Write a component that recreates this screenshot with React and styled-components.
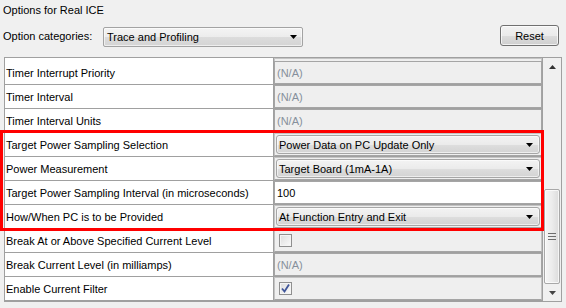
import React from 'react';
import styled, { createGlobalStyle } from 'styled-components';

const Global = createGlobalStyle`
  html, body { margin: 0; padding: 0; background: #f0f0f0; }
  body { font-family: "Liberation Sans", Arial, sans-serif; font-size: 11px; color: #000; }
  * { box-sizing: border-box; }
`;

const Page = styled.div`
  position: relative;
  width: 566px;
  height: 308px;
  overflow: hidden;
  display: flex;
  flex-direction: column;
`;

const Title = styled.div`
  height: 20px;
  line-height: 20px;
  padding-left: 3px;
`;

const Toolbar = styled.div`
  display: flex;
  align-items: flex-start;
  height: 22px;
  margin-top: 5px;
  padding: 0 7px 0 3px;
`;

const ToolLabel = styled.span`
  margin-top: 5px;
  width: 100px;
`;

const Combo = styled.div`
  margin-top: 2px;
  width: 200px;
  height: 20px;
  border: 1px solid #a3a3a3;
  border-radius: 2px;
  background: linear-gradient(#f4f4f4 0%, #ececec 50%, #dcdcdc 51%, #d4d4d4 100%);
  display: flex;
  align-items: center;
  justify-content: space-between;
  padding: 0 5px 0 3px;
  box-shadow: inset 0 0 0 1px rgba(255,255,255,0.6);
`;

const Spacer = styled.div`
  flex: 1;
`;

const Button = styled.button`
  width: 59px;
  height: 21px;
  border: 1px solid #707070;
  border-radius: 3px;
  background: linear-gradient(#f2f2f2 0%, #ebebeb 50%, #dddddd 51%, #cfcfcf 100%);
  box-shadow: inset 0 0 0 1px rgba(255,255,255,0.7);
  font: inherit;
  color: #000;
  padding: 0;
`;

const Table = styled.div`
  margin: 10px 0 0 4px;
  width: 558px;
  height: 245px;
  border: 1px solid #a0a0a0;
  display: flex;
  background: #fff;
`;

const Body = styled.div`
  flex: 1;
  display: flex;
  flex-direction: column;
`;

const Row = styled.div`
  display: grid;
  grid-template-columns: 268px 1px 268px;
  height: ${p => p.$h || 24}px;
  border-bottom: 1px solid #a0a0a0;
`;

const Label = styled.div`
  background: #fff;
  display: flex;
  align-items: center;
  padding-left: 1px;
  white-space: nowrap;
`;

const ColLine = styled.div`
  background: #a0a0a0;
`;

const Cell = styled.div`
  background: ${p => (p.$white ? '#fff' : '#efefef')};
  border: 1px solid ${p => (p.$boxed ? '#a5a5a5' : '#c4c4c4')};
  border-bottom-color: #a5a5a5;
  display: flex;
  align-items: center;
  padding: ${p => (p.$pad ? '0 0 0 2px' : '1px')};
  color: ${p => (p.$muted ? '#86909c' : '#000')};
`;

const Select = styled.div`
  flex: 1;
  align-self: stretch;
  border: 1px solid #a6a6a6;
  border-radius: 3px;
  background: linear-gradient(#f3f3f3 0%, #ebebeb 50%, #dedede 51%, #d3d3d3 100%);
  box-shadow: inset 0 0 0 1px rgba(255,255,255,0.6);
  display: flex;
  align-items: center;
  justify-content: space-between;
  padding: 0 6px 0 2px;
`;

const Box = styled.span`
  width: 13px;
  height: 13px;
  margin-left: 3px;
  border: 1px solid #8f8f8f;
  background: linear-gradient(135deg, #dcdcdc, #fbfbfb);
  box-shadow: inset 0 0 0 1px #f4f4f4;
  display: flex;
  align-items: center;
  justify-content: center;
`;

const Scrollbar = styled.div`
  width: 19px;
  border-left: 1px solid #a0a0a0;
  background: #f0f0f0;
  display: flex;
  flex-direction: column;
`;

const ArrowBtn = styled.div`
  height: 17px;
  display: flex;
  align-items: center;
  justify-content: center;
`;

const Track = styled.div`
  flex: 1;
  display: flex;
  flex-direction: column;
`;

const Thumb = styled.div`
  margin: 114px 1px 0 1px;
  height: 95px;
  border: 1px solid #a8a8a8;
  border-radius: 2px;
  background: linear-gradient(90deg, #f6f6f6 0%, #ececec 50%, #dcdcdc 100%);
  box-shadow: inset 0 0 0 1px rgba(255,255,255,0.7);
  display: flex;
  align-items: center;
  justify-content: center;
`;

const Highlight = styled.div`
  position: absolute;
  left: 0;
  top: 130px;
  width: 544px;
  height: 101px;
  border: 3px solid #ff0000;
  pointer-events: none;
`;

const Down = ({ c = '#000' }) => (
  <svg width="7" height="4" viewBox="0 0 7 4"><polygon points="0,0 7,0 3.5,4" fill={c} /></svg>
);
const Up = ({ c = '#333' }) => (
  <svg width="7" height="4" viewBox="0 0 7 4"><polygon points="0,4 7,4 3.5,0" fill={c} /></svg>
);

const Grip = () => (
  <svg width="8" height="7" viewBox="0 0 8 7">
    <rect x="0" y="0" width="8" height="1" fill="#6e6e6e" />
    <rect x="0" y="3" width="8" height="1" fill="#6e6e6e" />
    <rect x="0" y="6" width="8" height="1" fill="#6e6e6e" />
  </svg>
);

const Check = () => (
  <svg width="11" height="11" viewBox="0 0 11 11">
    <path d="M2 5.5 L4.5 8.5 L9 1.5" stroke="#3f5599" strokeWidth="1.8" fill="none" />
  </svg>
);

const rows = [
  { label: 'Timer Interrupt Priority', kind: 'na' },
  { label: 'Timer Interval', kind: 'na' },
  { label: 'Timer Interval Units', kind: 'na' },
  { label: 'Target Power Sampling Selection', kind: 'select', value: 'Power Data on PC Update Only' },
  { label: 'Power Measurement', kind: 'select', value: 'Target Board (1mA-1A)' },
  { label: 'Target Power Sampling Interval (in microseconds)', kind: 'input', value: '100' },
  { label: 'How/When PC is to be Provided', kind: 'select', value: 'At Function Entry and Exit' },
  { label: 'Break At or Above Specified Current Level', kind: 'check', checked: false },
  { label: 'Break Current Level (in milliamps)', kind: 'na' },
  { label: 'Enable Current Filter', kind: 'check', checked: true },
];

function Value({ r }) {
  if (r.kind === 'na') return <Cell $pad $muted $boxed>(N/A)</Cell>;
  if (r.kind === 'input') return <Cell $pad $white $boxed>{r.value}</Cell>;
  if (r.kind === 'check')
    return (
      <Cell>
        <Box>{r.checked && <Check />}</Box>
      </Cell>
    );
  return (
    <Cell>
      <Select>
        <span>{r.value}</span>
        <Down />
      </Select>
    </Cell>
  );
}

export default function App() {
  return (
    <Page>
      <Global />
      <Title>Options for Real ICE</Title>
      <Toolbar>
        <ToolLabel>Option categories:</ToolLabel>
        <Combo>
          <span>Trace and Profiling</span>
          <Down />
        </Combo>
        <Spacer />
        <Button>Reset</Button>
      </Toolbar>
      <Table>
        <Body>
          <Row $h={3}>
            <Label />
            <ColLine />
            <Cell />
          </Row>
          {rows.map(r => (
            <Row key={r.label}>
              <Label>{r.label}</Label>
              <ColLine />
              <Value r={r} />
            </Row>
          ))}
        </Body>
        <Scrollbar>
          <ArrowBtn><Up /></ArrowBtn>
          <Track>
            <Thumb><Grip /></Thumb>
          </Track>
          <ArrowBtn><Down c="#444" /></ArrowBtn>
        </Scrollbar>
      </Table>
      <Highlight />
    </Page>
  );
}
